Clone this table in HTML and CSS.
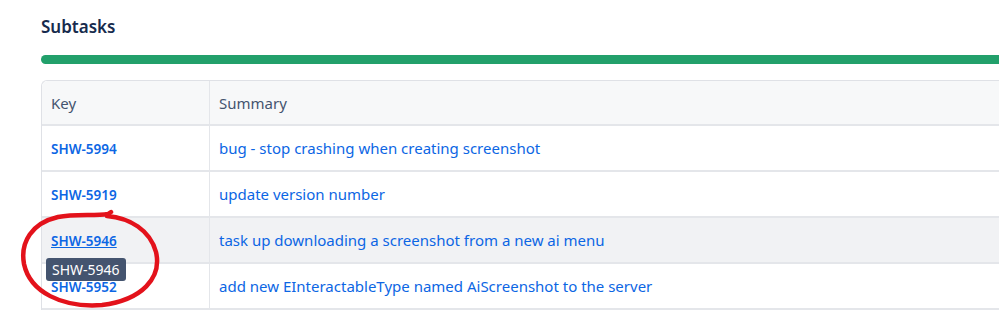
FILE: index.html
```html
<!DOCTYPE html>
<html lang="en">
<head>
  <meta charset="UTF-8" />
  <title>Subtasks</title>
  <link rel="stylesheet" href="styles.css">
</head>
<body>

  <div class="panel">
    <h2 class="panel-title">Subtasks</h2>
    <div class="progress"><div class="progress-fill"></div></div>

    <table class="subtasks">
      <thead>
        <tr>
          <th class="col-key">Key</th>
          <th>Summary</th>
        </tr>
      </thead>
      <tbody>
        <tr>
          <td class="col-key"><a href="#">SHW-5994</a></td>
          <td><a class="summary" href="#">bug - stop crashing when creating screenshot</a></td>
        </tr>
        <tr>
          <td class="col-key"><a href="#">SHW-5919</a></td>
          <td><a class="summary" href="#">update version number</a></td>
        </tr>
        <tr class="hover">
          <td class="col-key">
            <a class="hovered" href="#">SHW-5946</a>
            <span class="tooltip">SHW-5946</span>
          </td>
          <td><a class="summary" href="#">task up downloading a screenshot from a new ai menu</a></td>
        </tr>
        <tr>
          <td class="col-key"><a href="#">SHW-5952</a></td>
          <td><a class="summary" href="#">add new EInteractableType named AiScreenshot to the server</a></td>
        </tr>
      </tbody>
    </table>

    <!-- hand drawn marker round the hovered key -->
    <svg class="scribble" width="180" height="110" viewBox="0 0 180 110">
      <path d="M107 16 C 130 18, 150 30, 156 52 C 162 78, 142 100, 102 105 C 62 108, 30 92, 24 64 C 20 42, 32 23, 58 17 C 75 14, 95 16, 108 14 L 111 12"
            fill="none" stroke="#e3121b" stroke-width="4.5" stroke-linecap="round" stroke-linejoin="round"/>
    </svg>
  </div>

</body>
</html>
```

FILE: styles.css
```css
body {
  margin: 0;
  font-family: "Segoe UI", "Noto Sans", "Open Sans", sans-serif;
  background: #fff;
  color: #172b4d;
  overflow: hidden;
}
.panel {
  position: relative;
  width: 1040px;
  padding: 15px 0 0 41px;
}
.panel-title {
  font-size: 17px;
  font-weight: 600;
  margin: 0;
  line-height: 24px;
  color: #172b4d;
}
.progress {
  margin-top: 16px;
  height: 9px;
  border-radius: 5px 0 0 5px;
  background: #dfe1e6;
  overflow: hidden;
}
.progress-fill { width: 100%; height: 100%; background: #22a06b; }

.subtasks {
  margin-top: 16px;
  width: 100%;
  border-collapse: separate;
  border-spacing: 0;
  border: 1px solid #dfe1e6;
  border-right: none;
  border-radius: 6px 0 0 0;
  font-size: 15px;
}
.subtasks th, .subtasks td {
  text-align: left;
  height: 44px;
  padding: 0 9px;
  border-bottom: 2px solid #e4e6ea;
}
.subtasks th {
  height: 43px;
  background: #f7f8f9;
  color: #44546f;
  font-weight: 400;
  font-size: 15px;
  border-top-left-radius: 6px;
}
.subtasks th + th { border-top-left-radius: 0; }
.subtasks .col-key {
  width: 149px;
  border-right: 1px solid #e4e6ea;
  position: relative;
}
.subtasks td.col-key a {
  font-size: 13.5px;
  font-weight: 600;
  color: #0c66e4;
  text-decoration: none;
}
.subtasks td.col-key a.hovered { text-decoration: underline; }
.subtasks .summary {
  color: #0c66e4;
  text-decoration: none;
}
.subtasks tr.hover td { background: #f1f2f4; }

.tooltip {
  position: absolute;
  left: 4px;
  top: 40px;
  background: #44546f;
  color: #fff;
  font-size: 14px;
  line-height: 23px;
  padding: 0 6px;
  border-radius: 3px;
  z-index: 2;
}
.scribble {
  position: absolute;
  left: 0;
  top: 200px;
  z-index: 3;
}
```
